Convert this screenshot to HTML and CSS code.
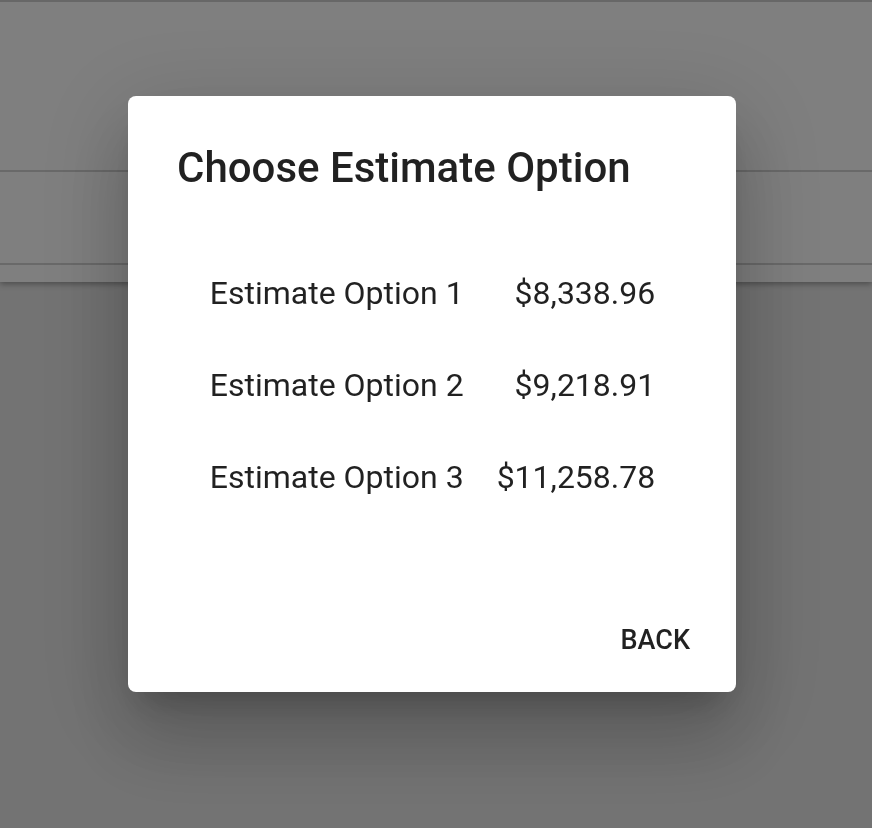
FILE: index.html
```html
<!DOCTYPE html>
<html>
<head>
<meta charset="utf-8">
<link rel="stylesheet" href="styles.css">
</head>
<body>
<div class="page">
  <div class="header">
    <div class="hrow hrow-top"></div>
    <div class="hrow hrow-mid"></div>
    <div class="hrow hrow-bot"></div>
  </div>
</div>
<div class="overlay">
  <div class="dialog">
    <h2 class="title">Choose Estimate Option</h2>
    <div class="content">
      <table class="options">
        <tr><td class="label">Estimate Option 1</td><td class="value">$8,338.96</td></tr>
        <tr><td class="label">Estimate Option 2</td><td class="value">$9,218.91</td></tr>
        <tr><td class="label">Estimate Option 3</td><td class="value">$11,258.78</td></tr>
      </table>
    </div>
    <div class="actions">
      <button class="btn">BACK</button>
    </div>
  </div>
</div>
</body>
</html>
```
FILE: styles.css
```css
html, body {
  margin: 0;
  padding: 0;
  height: 100%;
}
body {
  background: #e6e6e6;
  font-family: Roboto, "Liberation Sans", sans-serif;
  overflow: hidden;
}
.header {
  background: #fff;
  border-top: 2px solid #cfcfcf;
  box-shadow: 0 2px 6px rgba(0,0,0,0.35);
}
.hrow-top {
  height: 168px;
  border-bottom: 2px solid #d2d2d2;
}
.hrow-mid {
  height: 91px;
  border-bottom: 2px solid #d2d2d2;
}
.hrow-bot {
  height: 17px;
}
.overlay {
  position: fixed;
  inset: 0;
  background: rgba(0,0,0,0.5);
  display: flex;
  justify-content: flex-start;
  align-items: flex-start;
  padding: 96px 0 0 128px;
}
.dialog {
  width: 608px;
  height: 596px;
  box-sizing: border-box;
  background: #fff;
  border-radius: 8px;
  display: flex;
  flex-direction: column;
  box-shadow: 0 22px 30px -14px rgba(0,0,0,0.2),
              0 48px 76px 6px rgba(0,0,0,0.14),
              0 18px 92px 16px rgba(0,0,0,0.12);
  color: rgba(0,0,0,0.87);
}
.title {
  margin: 0;
  padding: 44px 40px 0 49px;
  font-size: 42px;
  font-weight: 500;
  line-height: 56px;
}
.content {
  flex: 1;
  display: flex;
  justify-content: center;
  padding-top: 79px;
  padding-left: 1px;
}
.options {
  border-collapse: collapse;
  font-size: 32px;
  height: fit-content;
}
.options td {
  padding: 0;
  height: 92px;
  vertical-align: top;
  line-height: 36px;
}
.options .label {
  padding-right: 33px;
}
.options .value {
  text-align: right;
}
.actions {
  display: flex;
  justify-content: flex-end;
  padding: 0 16px 16px 0;
}
.btn {
  border: none;
  background: none;
  font-family: inherit;
  font-size: 27px;
  font-weight: 500;
  color: rgba(0,0,0,0.87);
  padding: 12px 30px;
  line-height: 48px;
}
```
